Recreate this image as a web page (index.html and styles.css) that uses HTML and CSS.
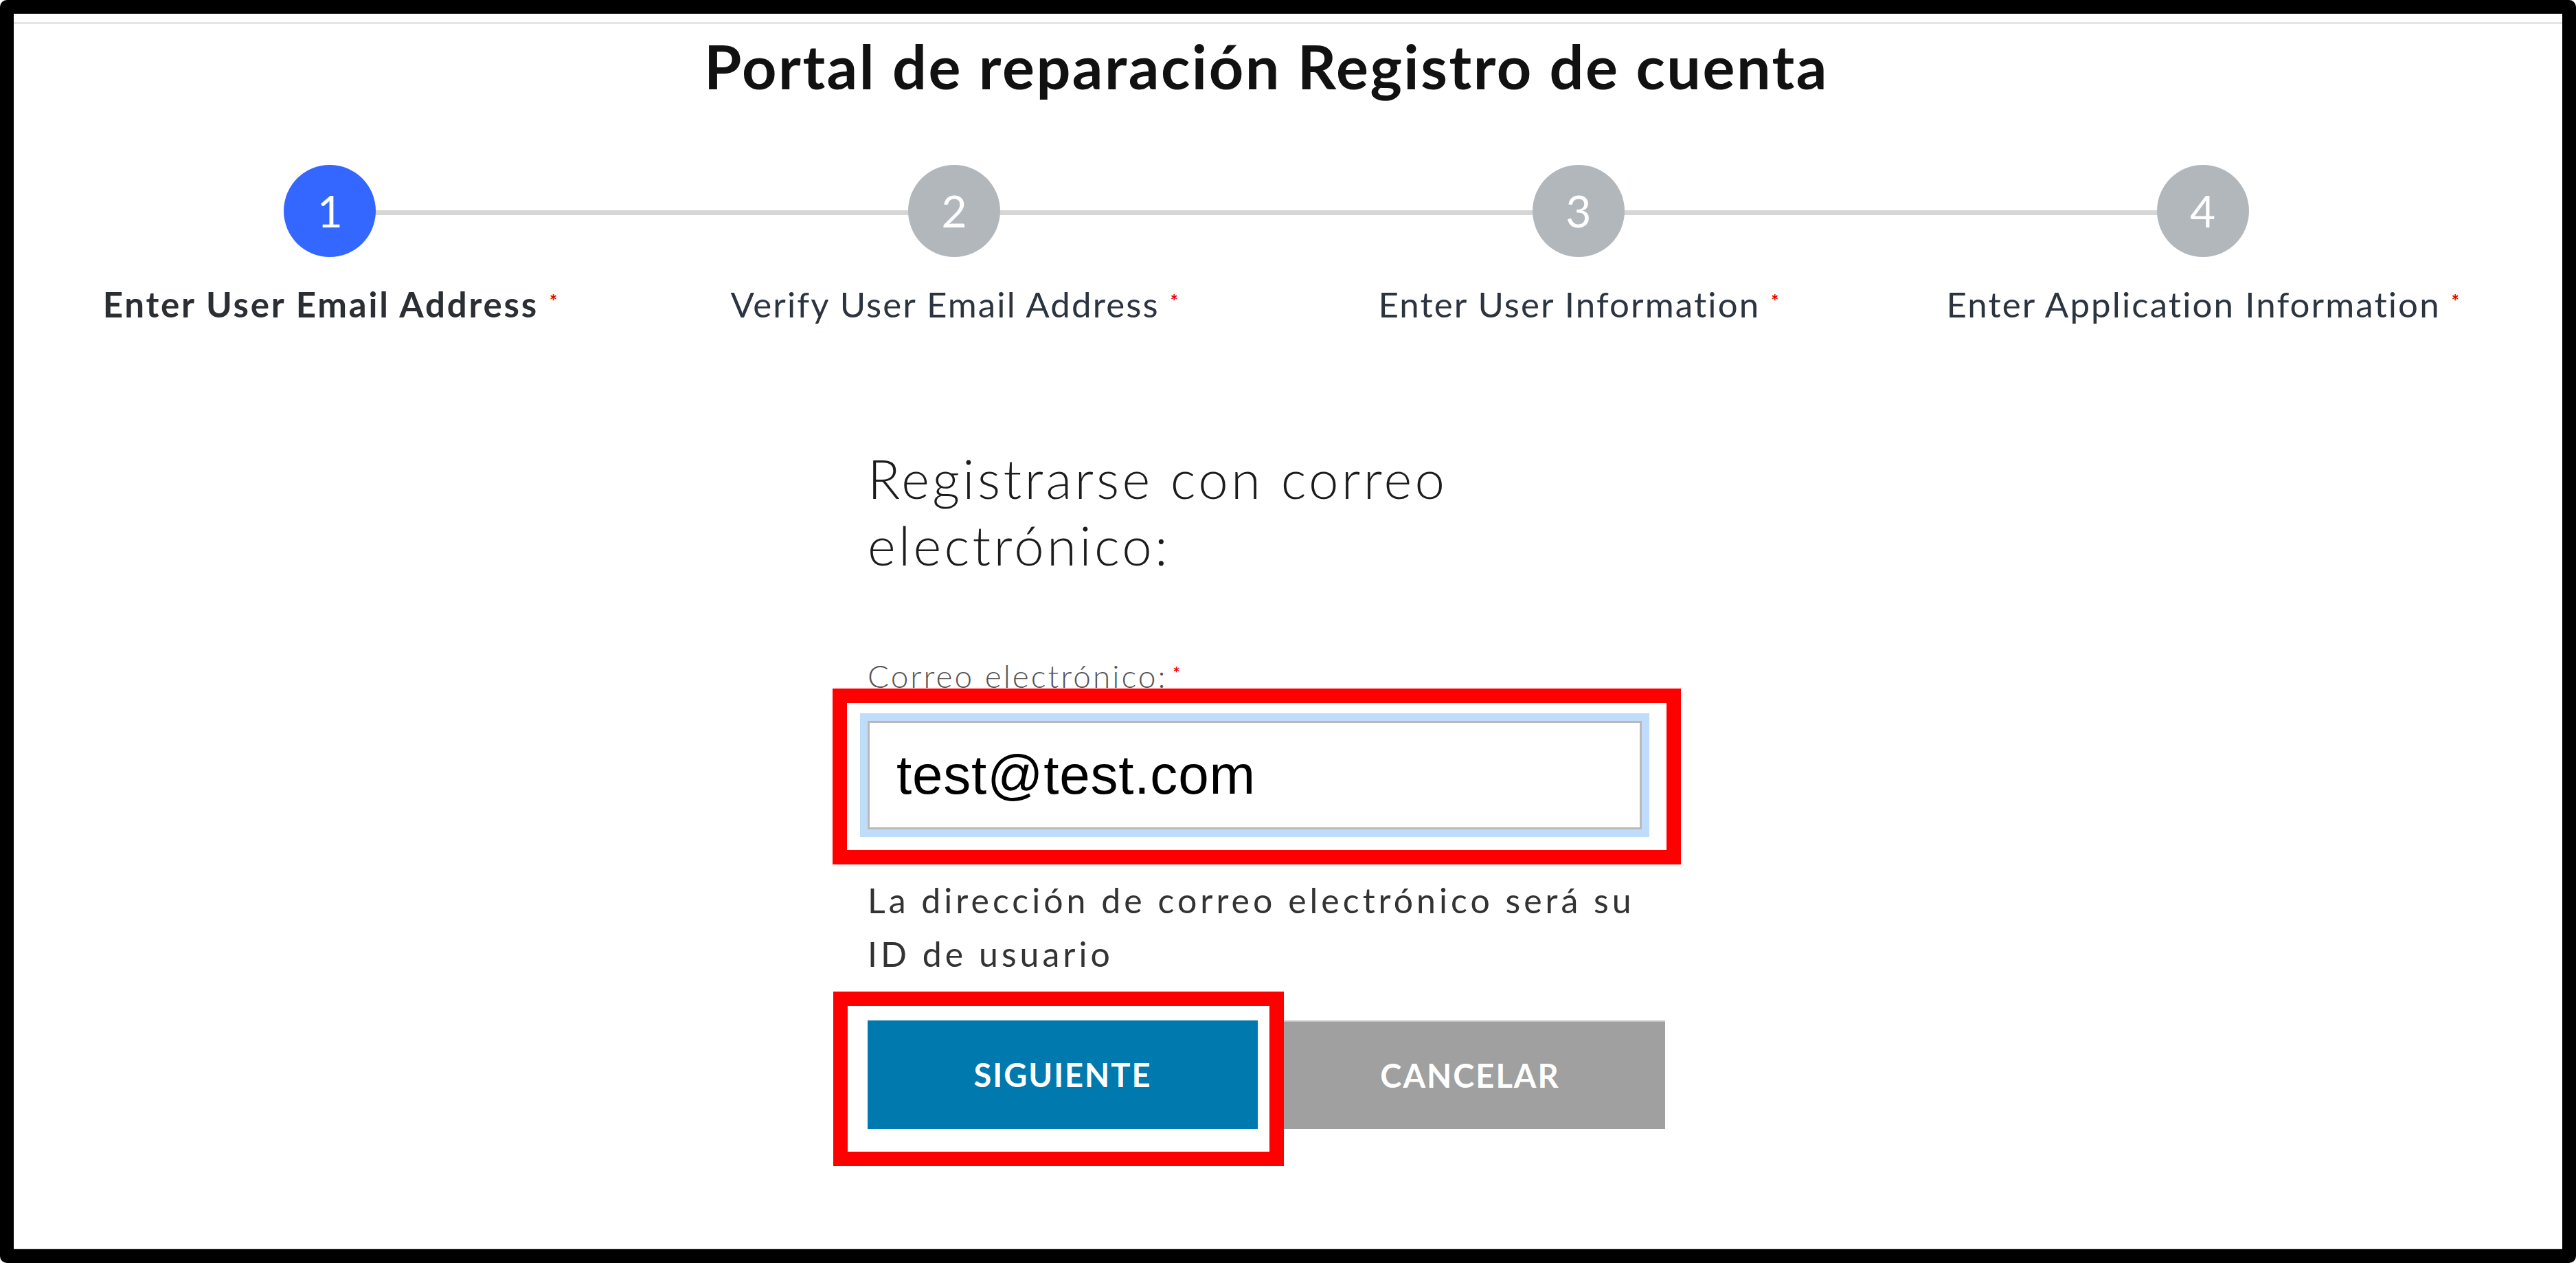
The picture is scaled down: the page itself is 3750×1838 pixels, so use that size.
FILE: index.html
```html
<!DOCTYPE html>
<html lang="es">
<head>
<meta charset="utf-8">
<title>Portal de reparación Registro de cuenta</title>
<link rel="stylesheet" href="styles.css">
</head>
<body>
<div class="frame">
  <div class="topline"></div>
  <div class="page">
    <h1 class="title">Portal de reparación Registro de cuenta</h1>
    <ol class="stepper">
      <li class="step active"><span class="dot">1</span><span class="label">Enter User Email Address<span class="req">*</span></span></li>
      <li class="step"><span class="dot">2</span><span class="label">Verify User Email Address<span class="req">*</span></span></li>
      <li class="step"><span class="dot">3</span><span class="label">Enter User Information<span class="req">*</span></span></li>
      <li class="step"><span class="dot">4</span><span class="label">Enter Application Information<span class="req">*</span></span></li>
    </ol>
    <form class="signup">
      <h2 class="heading">Registrarse con correo electrónico:</h2>
      <label class="field-label" for="email">Correo electrónico:<span class="req">*</span></label>
      <div class="input-wrap">
        <input class="email" id="email" type="text" value="test@test.com">
        <span class="annot annot-input"></span>
      </div>
      <p class="helper">La dirección de correo electrónico será su ID de usuario</p>
      <div class="actions">
        <div class="btn-wrap">
          <button type="button" class="btn primary">SIGUIENTE</button>
          <span class="annot annot-btn"></span>
        </div>
        <button type="button" class="btn secondary">CANCELAR</button>
      </div>
    </form>
  </div>
  <div class="bottomline"></div>
</div>
</body>
</html>
```

FILE: styles.css
```css
html, body {
  margin: 0;
  padding: 0;
  background: #ffffff;
}

body {
  font-family: Lato, "Noto Sans", sans-serif;
  color: #222222;
}

.frame {
  box-sizing: border-box;
  width: 3750px;
  height: 1838px;
  border: 20px solid #000000;
  border-radius: 10px;
  background: #ffffff;
  display: flex;
  flex-direction: column;
  overflow: hidden;
}

.topline {
  height: 3px;
  margin-top: 12px;
  background: #e4e4e4;
  flex: none;
}

.page {
  margin-left: 6px;
  width: 3635px;
  flex: 1;
}

.title {
  margin: 8px 0 0;
  font-size: 88px;
  line-height: 106px;
  font-weight: 700;
  letter-spacing: 2.5px;
  text-align: center;
  color: #111111;
}

.stepper {
  list-style: none;
  margin: 91px 0 0;
  padding: 0;
  display: grid;
  grid-template-columns: repeat(4, 1fr);
}

.step {
  position: relative;
  display: flex;
  flex-direction: column;
  align-items: center;
}

.step + .step::before {
  content: "";
  position: absolute;
  top: 66px;
  left: -50%;
  width: 100%;
  height: 7px;
  background: #d6d6d6;
  z-index: 0;
}

.dot {
  position: relative;
  z-index: 1;
  width: 134px;
  height: 134px;
  border-radius: 50%;
  background: #b1b7bb;
  color: #ffffff;
  font-size: 64px;
  line-height: 1;
  display: flex;
  align-items: center;
  justify-content: center;
}

.step.active .dot {
  background: #3367ff;
}

.label {
  margin-top: 34px;
  font-size: 51px;
  line-height: 60px;
  letter-spacing: 2.1px;
  color: #2c3440;
  white-space: nowrap;
}

.step.active .label {
  font-weight: 700;
  letter-spacing: 2.8px;
  color: #2b2f33;
}

.req {
  color: #ee0000;
  font-size: 26px;
  font-weight: 700;
  letter-spacing: 0;
  margin-left: 16px;
  vertical-align: 14px;
}

.signup {
  width: 1161px;
  margin: 175px auto 0;
}

.heading {
  margin: 0;
  font-size: 78px;
  line-height: 97px;
  font-weight: 300;
  letter-spacing: 4.3px;
  color: #1c1c1c;
  width: 900px;
}

.field-label {
  display: block;
  margin-top: 110px;
  font-size: 46px;
  line-height: 55px;
  font-weight: 300;
  letter-spacing: 3px;
  color: #555555;
}

.field-label .req {
  margin-left: 8px;
  font-size: 24px;
  vertical-align: 12px;
}

.input-wrap {
  position: relative;
  width: 1127px;
  margin-top: 38px;
}

.email {
  display: block;
  box-sizing: border-box;
  width: 1127px;
  height: 158px;
  margin: 0;
  padding: 0 0 0 39px;
  border: 3px solid #b9b9b9;
  box-shadow: 0 0 0 11px #bfdcfb;
  outline: none;
  font-family: "Liberation Sans", Arial, sans-serif;
  font-size: 80px;
  letter-spacing: 0.8px;
  color: #000000;
  background: #ffffff;
}

.annot {
  position: absolute;
  box-sizing: border-box;
  border: 21px solid #ff0000;
  pointer-events: none;
}

.annot-input {
  left: -51px;
  top: -47px;
  right: -57px;
  bottom: -51px;
}

.helper {
  margin: 64px 0 0;
  max-width: 1128px;
  font-family: Lato, sans-serif;
  font-size: 50px;
  line-height: 78px;
  letter-spacing: 5px;
  color: #333333;
}

.actions {
  display: flex;
  gap: 25px;
  margin-top: 58px;
}

.btn-wrap {
  position: relative;
}

.btn {
  display: block;
  box-sizing: border-box;
  width: 568px;
  height: 158px;
  margin: 0;
  border: 0;
  padding: 0;
  font-family: Lato, sans-serif;
  font-size: 47px;
  font-weight: 700;
  letter-spacing: 2px;
  color: #ffffff;
  cursor: pointer;
}

.btn.primary {
  background: #0079ae;
}

.btn.secondary {
  background: #a0a0a0;
  border-top: 2px solid #c4c4c4;
}

.annot-btn {
  left: -50px;
  top: -42px;
  right: -38px;
  bottom: -54px;
}

.bottomline {
  height: 1px;
  background: #cccccc;
  flex: none;
}
```
